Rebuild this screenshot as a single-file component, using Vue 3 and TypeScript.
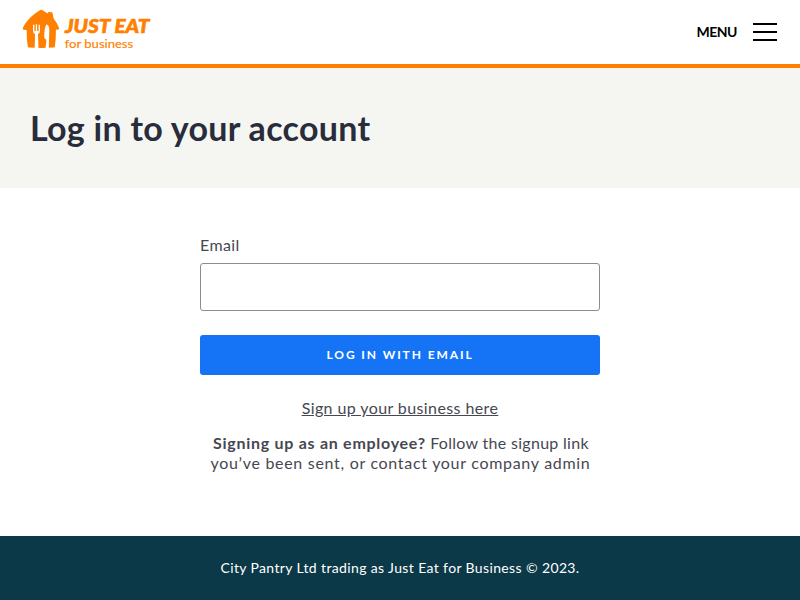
<script setup lang="ts">
import { ref } from 'vue'

const email = ref<string>('')
</script>

<template>
  <div class="page">
    <header class="header">
      <a class="logo" aria-label="Just Eat for business">
        <svg width="130" height="42" viewBox="0 0 130 42">
          <g fill="#ff8000">
            <path d="M17.6 2.4Q19.3 1.2 21 2.4L25.6 5.6L25.9 4.2Q29.2 3.5 30.4 4.6L31.7 10.8Q35.5 15.3 37.2 20.3Q37.4 21.5 36.1 21.6L33.9 21.8Q34.1 31 32.8 38.7Q32.6 39.5 31.7 39.6Q19.3 40.3 6.9 39.6Q6 39.5 5.8 38.6Q4.5 31 4.7 22L1.8 21.8Q.4 21.6.8 20.3C3.5 13.4 10.2 7 17.6 2.4Z" />
            <text x="43" y="25" class="brand" textLength="84.5" lengthAdjust="spacingAndGlyphs">JUST EAT</text>
            <text x="42.7" y="39.7" class="subbrand" textLength="68.5" lengthAdjust="spacingAndGlyphs">for business</text>
          </g>
          <path d="M11 16.8V22.5Q11 25.4 13 26L12.7 40.5H16.5L16 26Q18 25.2 18 22.5L17.8 16.8H16.6V23H15.1V16.3H13.8V23H12.4V16.8ZM26.8 40.5L27.3 21.8Q27.2 17 24.5 16.2Q22.3 19.5 22.2 28.8Q22.4 31.3 24.4 31.7L23.5 40.5Z" fill="#fff" />
        </svg>
      </a>
      <button class="menu" type="button">
        <span>MENU</span>
        <svg width="24" height="18" viewBox="0 0 24 18">
          <path d="M0 1H24M0 9H24M0 17H24" stroke="#000" stroke-width="2" />
        </svg>
      </button>
    </header>
    <section class="banner">
      <h1>Log in to your account</h1>
    </section>
    <main class="content">
      <form class="form" @submit.prevent>
        <label for="email">Email</label>
        <input id="email" v-model="email" type="email" />
        <button class="submit" type="submit">LOG IN WITH EMAIL</button>
        <a class="signup">Sign up your business here</a>
        <p class="employee">
          <span class="first"><strong>Signing up as an employee?</strong> Follow the signup link</span><br />
          <span class="second">you’ve been sent, or contact your company admin</span>
        </p>
      </form>
    </main>
    <footer class="footer">City Pantry Ltd trading as Just Eat for Business © 2023.</footer>
  </div>
</template>

<style>
body {
  margin: 0;
}
</style>

<style scoped>
.page {
  display: flex;
  flex-direction: column;
  height: 600px;
  overflow: hidden;
  background: #fff;
  color: #474751;
  font-family: Lato, sans-serif;
  font-size: 16px;
}
.header {
  box-sizing: border-box;
  display: flex;
  justify-content: space-between;
  height: 68px;
  padding: 8px 23px 0 22px;
  border-bottom: 4px solid #ff8000;
}
.logo svg,
.menu svg {
  display: block;
}
.brand {
  font: italic 900 19px Lato, sans-serif;
  stroke: #ff8000;
  stroke-width: 0.6px;
}
.subbrand {
  font: 400 12px Lato, sans-serif;
  stroke: #ff8000;
  stroke-width: 0.15px;
}
.menu {
  display: flex;
  align-items: center;
  gap: 16px;
  height: 48px;
  padding: 0;
  border: 0;
  background: none;
  color: #000;
  font: 700 14px Lato, sans-serif;
}
.menu span {
  padding-bottom: 2px;
  letter-spacing: -0.5px;
}
.banner {
  box-sizing: border-box;
  height: 120px;
  padding: 40px 30px;
  background: #f5f6f1;
}
h1 {
  margin: 0;
  color: #292c3b;
  font-size: 34px;
  line-height: 40px;
  font-weight: 700;
  letter-spacing: 0.29px;
  white-space: nowrap;
}
.content {
  flex: 1;
  display: flex;
  justify-content: center;
}
.form {
  display: flex;
  flex-direction: column;
  width: 400px;
  padding-top: 47px;
}
label {
  height: 28px;
  line-height: 20px;
  letter-spacing: 0.4px;
}
input {
  box-sizing: border-box;
  width: 400px;
  height: 48px;
  padding: 0 15px;
  border: 1px solid #8c8c93;
  border-radius: 3px;
  background: #fff;
  font: 16px Lato, sans-serif;
  outline: none;
}
.submit {
  height: 40px;
  margin-top: 24px;
  padding: 0 0 2px;
  border: 0;
  border-radius: 3px;
  background: #1574f5;
  color: #fff;
  font: 700 12px Lato, sans-serif;
  letter-spacing: 1.9px;
}
.signup {
  align-self: center;
  margin-top: 23px;
  line-height: 20px;
  text-decoration: underline;
  letter-spacing: 0.4px;
}
.employee {
  margin: 15px 0 0;
  line-height: 20px;
  text-align: center;
  white-space: nowrap;
}
.first {
  padding-left: 2px;
  letter-spacing: 0.3px;
}
.first strong {
  letter-spacing: 0.72px;
}
.second {
  padding-left: 1px;
  letter-spacing: 0.7px;
}
.footer {
  height: 64px;
  background: #0b3948;
  color: #fff;
  font-size: 14px;
  line-height: 64px;
  letter-spacing: 0.37px;
  text-align: center;
}
</style>
